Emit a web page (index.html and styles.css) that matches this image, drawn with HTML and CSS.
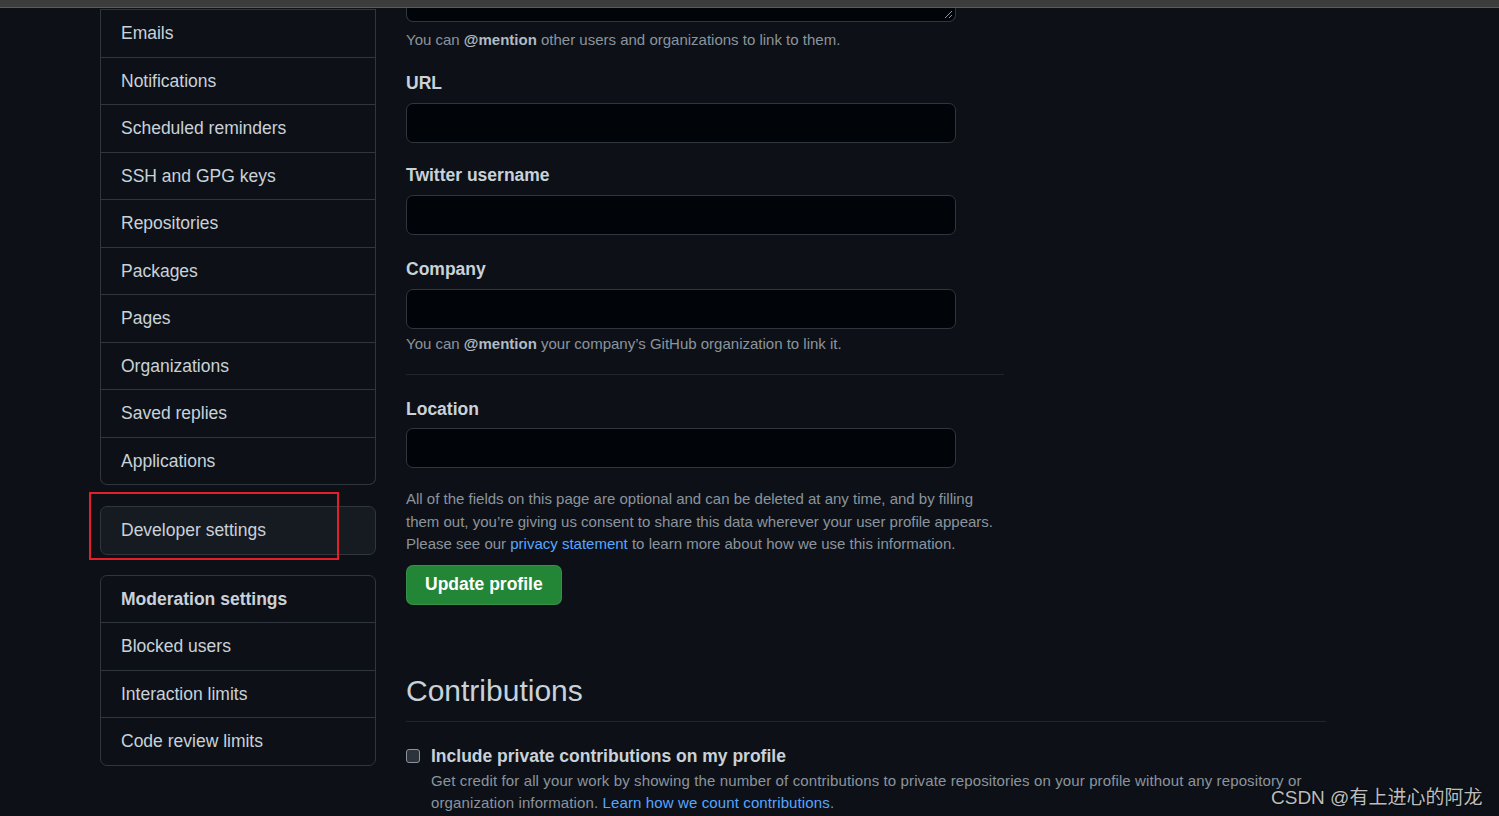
FILE: index.html
```html
<!DOCTYPE html>
<html lang="en">
<head>
    <meta charset="UTF-8">
    <title>Public profile</title>
    <link rel="stylesheet" href="styles.css">
</head>
<body>
    <div class="topbar"></div>

    <div class="layout">
        <!-- Settings sidebar -->
        <aside class="sidebar">
            <nav class="menu menu-top">
                <a class="menu-item" href="#">Emails</a>
                <a class="menu-item" href="#">Notifications</a>
                <a class="menu-item" href="#">Scheduled reminders</a>
                <a class="menu-item" href="#">SSH and GPG keys</a>
                <a class="menu-item" href="#">Repositories</a>
                <a class="menu-item" href="#">Packages</a>
                <a class="menu-item" href="#">Pages</a>
                <a class="menu-item" href="#">Organizations</a>
                <a class="menu-item" href="#">Saved replies</a>
                <a class="menu-item" href="#">Applications</a>
            </nav>

            <nav class="menu menu-dev">
                <a class="menu-item" href="#">Developer settings</a>
                <span class="highlight"></span>
            </nav>

            <nav class="menu menu-mod">
                <div class="menu-item menu-heading">Moderation settings</div>
                <a class="menu-item" href="#">Blocked users</a>
                <a class="menu-item" href="#">Interaction limits</a>
                <a class="menu-item" href="#">Code review limits</a>
            </nav>
        </aside>

        <!-- Profile form -->
        <main class="main">
            <div class="profile-form">
                <div class="textarea-tail">
                    <svg class="grip" width="9" height="9" viewBox="0 0 9 9">
                        <path d="M8 1L1 8M8 5L5 8" stroke="#8b949e" stroke-width="1"/>
                    </svg>
                </div>
                <p class="note first-note">You can <strong>@mention</strong> other users and organizations to link to them.</p>

                <div class="form-group">
                    <label>URL</label>
                    <div class="input"></div>
                </div>
                <div class="form-group">
                    <label>Twitter username</label>
                    <div class="input"></div>
                </div>
                <div class="form-group company">
                    <label>Company</label>
                    <div class="input"></div>
                </div>
                <p class="note company-note">You can <strong>@mention</strong> your company’s GitHub organization to link it.</p>

                <hr class="divider">

                <div class="form-group location">
                    <label>Location</label>
                    <div class="input"></div>
                </div>

                <p class="info">All of the fields on this page are optional and can be deleted at any time, and by filling them out, you’re giving us consent to share this data wherever your user profile appears. Please see our <a href="#">privacy statement</a> to learn more about how we use this information.</p>

                <button class="btn-primary">Update profile</button>
            </div>

            <section class="contributions">
                <h2>Contributions</h2>
                <div class="check-row">
                    <span class="checkbox"></span>
                    <div class="check-text">
                        <div class="check-label">Include private contributions on my profile</div>
                        <p class="check-desc">Get credit for all your work by showing the number of contributions to private repositories on your profile without any repository or organization information. <a href="#">Learn how we count contributions</a>.</p>
                    </div>
                </div>
            </section>
        </main>
    </div>

    <div class="watermark">CSDN @有上进心的阿龙</div>
</body>
</html>
```

FILE: styles.css
```css
/* General Styles */
body {
    margin: 0;
    height: 816px;
    overflow: hidden;
    background-color: #0d1117;
    color: #c9d1d9;
    font-family: 'Liberation Sans', Arial, sans-serif;
}
a {
    color: #58a6ff;
    text-decoration: none;
}
.topbar {
    height: 7px;
    background: #3c3c3c;
    border-bottom: 1px solid #5c5c5c;
}

.layout {
    display: flex;
    gap: 30px;
    padding-left: 100px;
}

/* Sidebar */
.sidebar {
    width: 276px;
    flex-shrink: 0;
    display: flex;
    flex-direction: column;
    padding-top: 1px;
}
.menu {
    position: relative;
    border: 1px solid #30363d;
    border-radius: 7px;
}
.menu-top {
    border-top: none;
    border-radius: 0 0 7px 7px;
}
.menu-dev {
    margin-top: 21px;
    background: #161b22;
}
.menu-mod {
    margin-top: 20px;
}
.menu-item {
    display: block;
    padding: 12px 20px;
    line-height: 22.5px;
    font-size: 17.5px;
    color: #c9d1d9;
    border-top: 1px solid #30363d;
}
.menu .menu-item:first-child {
    border-top: none;
}
.menu-top .menu-item:first-child {
    border-top: 1px solid #30363d;
}
.menu-heading {
    font-weight: bold;
}
.highlight {
    position: absolute;
    left: -12px;
    top: -15px;
    width: 246px;
    height: 64px;
    border: 2.5px solid #e3202a;
}

/* Main column */
.main {
    width: 920px;
}
.profile-form {
    width: 598px;
}
.textarea-tail {
    position: relative;
    width: 548px;
    height: 13px;
    background: #010409;
    border: 1px solid #30363d;
    border-top: none;
    border-radius: 0 0 7px 7px;
}
.grip {
    position: absolute;
    right: 2px;
    bottom: 2px;
}
.note {
    margin: 0;
    font-size: 15px;
    line-height: 22px;
    color: #8b949e;
}
.note strong {
    color: #b1bac4;
}
.first-note {
    margin-top: 7px;
}
.form-group {
    margin-top: 21px;
}
.form-group.company {
    margin-top: 23px;
}
.form-group label {
    display: block;
    font-size: 17.5px;
    font-weight: bold;
    line-height: 22px;
    color: #c9d1d9;
}
.input {
    width: 548px;
    height: 38px;
    margin-top: 9px;
    background: #010409;
    border: 1px solid #30363d;
    border-radius: 7px;
}
.form-group.location {
    margin-top: 23px;
}
.location .input {
    margin-top: 8px;
}
.company-note {
    margin-top: 4px;
}
.divider {
    margin: 19px 0 0;
    border: none;
    border-top: 1px solid #21262d;
}
.info {
    margin: 20px 0 0;
    font-size: 15px;
    line-height: 22.5px;
    color: #8b949e;
}
.btn-primary {
    display: block;
    margin-top: 9px;
    height: 40px;
    padding: 0 18px;
    font-family: inherit;
    font-size: 17.5px;
    font-weight: bold;
    color: #ffffff;
    background: #238636;
    border: 1px solid rgba(240, 246, 252, 0.1);
    border-radius: 7px;
}

/* Contributions */
.contributions h2 {
    margin: 67px 0 0;
    padding-bottom: 12px;
    font-size: 30px;
    line-height: 37.5px;
    font-weight: normal;
    border-bottom: 1px solid #21262d;
}
.check-row {
    display: flex;
    gap: 11px;
    margin-top: 23px;
}
.checkbox {
    flex-shrink: 0;
    width: 12px;
    height: 12px;
    margin-top: 4px;
    border: 1px solid #8b949e;
    border-radius: 3px;
    background: #2d333b;
}
.check-label {
    font-size: 17.5px;
    font-weight: bold;
    line-height: 22px;
}
.check-desc {
    margin: 3px 0 0;
    font-size: 15px;
    line-height: 22px;
    letter-spacing: 0.12px;
    color: #8b949e;
}

.watermark {
    position: absolute;
    left: 1271px;
    top: 782px;
    font-size: 19px;
    color: #bdbdbd;
    font-family: 'Liberation Sans', 'Noto Sans CJK SC', sans-serif;
    text-shadow: 0 0 2px #000;
}
```
